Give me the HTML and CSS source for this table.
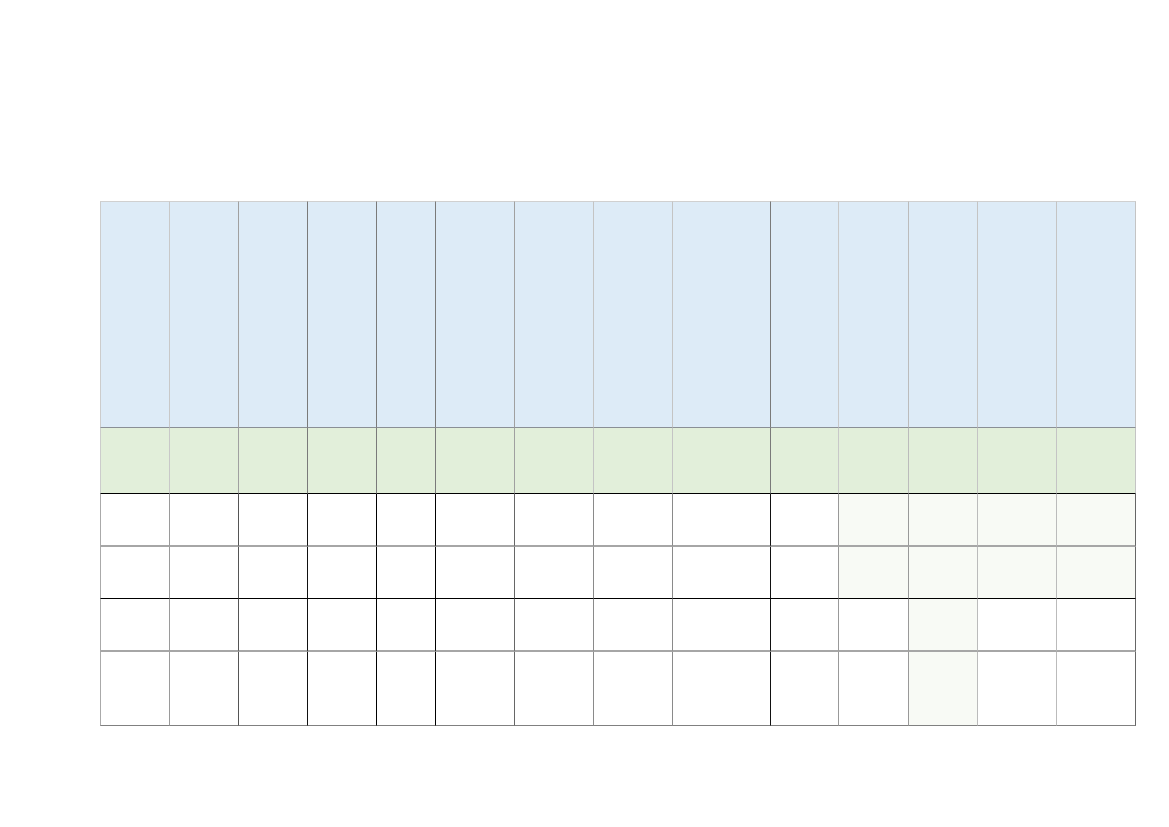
FILE: index.html
```html
<!DOCTYPE html>
<html>
<head>
<meta charset="utf-8">
<link rel="stylesheet" href="styles.css">
</head>
<body>
<div class="page">
  <div class="sheet">
    <div class="row head"><div></div><div></div><div></div><div></div><div></div><div></div><div></div><div></div><div></div><div></div><div></div><div></div><div></div><div></div></div>
    <div class="row sub"><div></div><div></div><div></div><div></div><div></div><div></div><div></div><div></div><div></div><div></div><div></div><div></div><div></div><div></div></div>
    <div class="row body r1"><div></div><div></div><div></div><div></div><div></div><div></div><div></div><div></div><div></div><div></div><div class="pale"></div><div class="pale"></div><div class="pale"></div><div class="pale"></div></div>
    <div class="row body r2"><div></div><div></div><div></div><div></div><div></div><div></div><div></div><div></div><div></div><div></div><div class="pale"></div><div class="pale"></div><div class="pale"></div><div class="pale"></div></div>
    <div class="row body r3"><div></div><div></div><div></div><div></div><div></div><div></div><div></div><div></div><div></div><div></div><div></div><div class="pale"></div><div></div><div></div></div>
    <div class="row body r4"><div></div><div></div><div></div><div></div><div></div><div></div><div></div><div></div><div></div><div></div><div></div><div class="pale"></div><div></div><div></div></div>
  </div>
</div>
</body>
</html>
```

FILE: styles.css
```css
html, body {
  margin: 0;
  padding: 0;
  background: #ffffff;
  font-family: "Liberation Sans", Arial, sans-serif;
}

.page {
  width: 1169px;
  height: 827px;
  padding: 201px 0 0 100px;
  box-sizing: border-box;
}

.sheet {
  display: flex;
  flex-direction: column;
  width: 1036px;
}

.row {
  display: grid;
  grid-template-columns: 70px 69px 69px 69px 59px 79px 79px 79px 98px 68px 70px 69px 79px 79px;
}

.row > div {
  box-sizing: border-box;
  border-right: 1px solid #999999;
  border-bottom: 1px solid #999999;
}

.row > div:first-child {
  border-left: 1px solid #cccccc;
}

/* header rows */
.head { height: 227px; }
.head > div {
  background: #ddebf7;
  border-top: 1px solid #d0d0d0;
  border-bottom-color: #8a8f96;
}
.sub { height: 66px; }
.sub > div {
  background: #e2efda;
  border-bottom-color: #000000;
}

.head > div:nth-child(1), .sub > div:nth-child(1) { border-right-color: #c8c8c8; }
.head > div:nth-child(2), .sub > div:nth-child(2) { border-right-color: #a0a0a0; }
.head > div:nth-child(3), .sub > div:nth-child(3) { border-right-color: #7a7a7a; }
.head > div:nth-child(4), .sub > div:nth-child(4) { border-right-color: #7a7a7a; }
.head > div:nth-child(5), .sub > div:nth-child(5) { border-right-color: #7a7a7a; }
.head > div:nth-child(6), .sub > div:nth-child(6) { border-right-color: #a0a0a0; }
.head > div:nth-child(7), .sub > div:nth-child(7) { border-right-color: #c4c4c4; }
.head > div:nth-child(8), .sub > div:nth-child(8) { border-right-color: #c4c4c4; }
.head > div:nth-child(9), .sub > div:nth-child(9) { border-right-color: #7a7a7a; }
.head > div:nth-child(10), .sub > div:nth-child(10) { border-right-color: #c8c8c8; }
.head > div:nth-child(11), .sub > div:nth-child(11) { border-right-color: #bbbbbb; }
.head > div:nth-child(12), .sub > div:nth-child(12) { border-right-color: #c4c4c4; }
.head > div:nth-child(13), .sub > div:nth-child(13) { border-right-color: #c4c4c4; }
.head > div:nth-child(14), .sub > div:nth-child(14) { border-right-color: #c4c4c4; }

/* body rows */
.body > div { background: #ffffff; }
.body > div.pale { background: #f8faf5; }

.r1 { height: 53px; }
.r1 > div { border-bottom: 2px solid #a6a6a6; }
.r2 { height: 52px; }
.r2 > div { border-bottom: 1px solid #000000; }
.r3 { height: 53px; }
.r3 > div { border-bottom: 2px solid #a6a6a6; }
.r4 { height: 74px; }
.r4 > div { border-bottom: 1px solid #808080; }

.body > div:nth-child(1) { border-left-color: #aaaaaa; border-right-color: #9a9a9a; }
.body > div:nth-child(2) { border-right-color: #555555; }
.body > div:nth-child(3) { border-right-color: #111111; }
.body > div:nth-child(4) { border-right-color: #000000; }
.body > div:nth-child(5) { border-right-color: #000000; }
.body > div:nth-child(6) { border-right-color: #666666; }
.body > div:nth-child(7) { border-right-color: #8a8a8a; }
.body > div:nth-child(8) { border-right-color: #8a8a8a; }
.body > div:nth-child(9) { border-right-color: #111111; }
.body > div:nth-child(10) { border-right-color: #999999; }
.body > div:nth-child(11) { border-right-color: #999999; }
.body > div:nth-child(12) { border-right-color: #bbbbbb; }
.body > div:nth-child(13) { border-right-color: #bbbbbb; }
.body > div:nth-child(14) { border-right-color: #666666; }
```
